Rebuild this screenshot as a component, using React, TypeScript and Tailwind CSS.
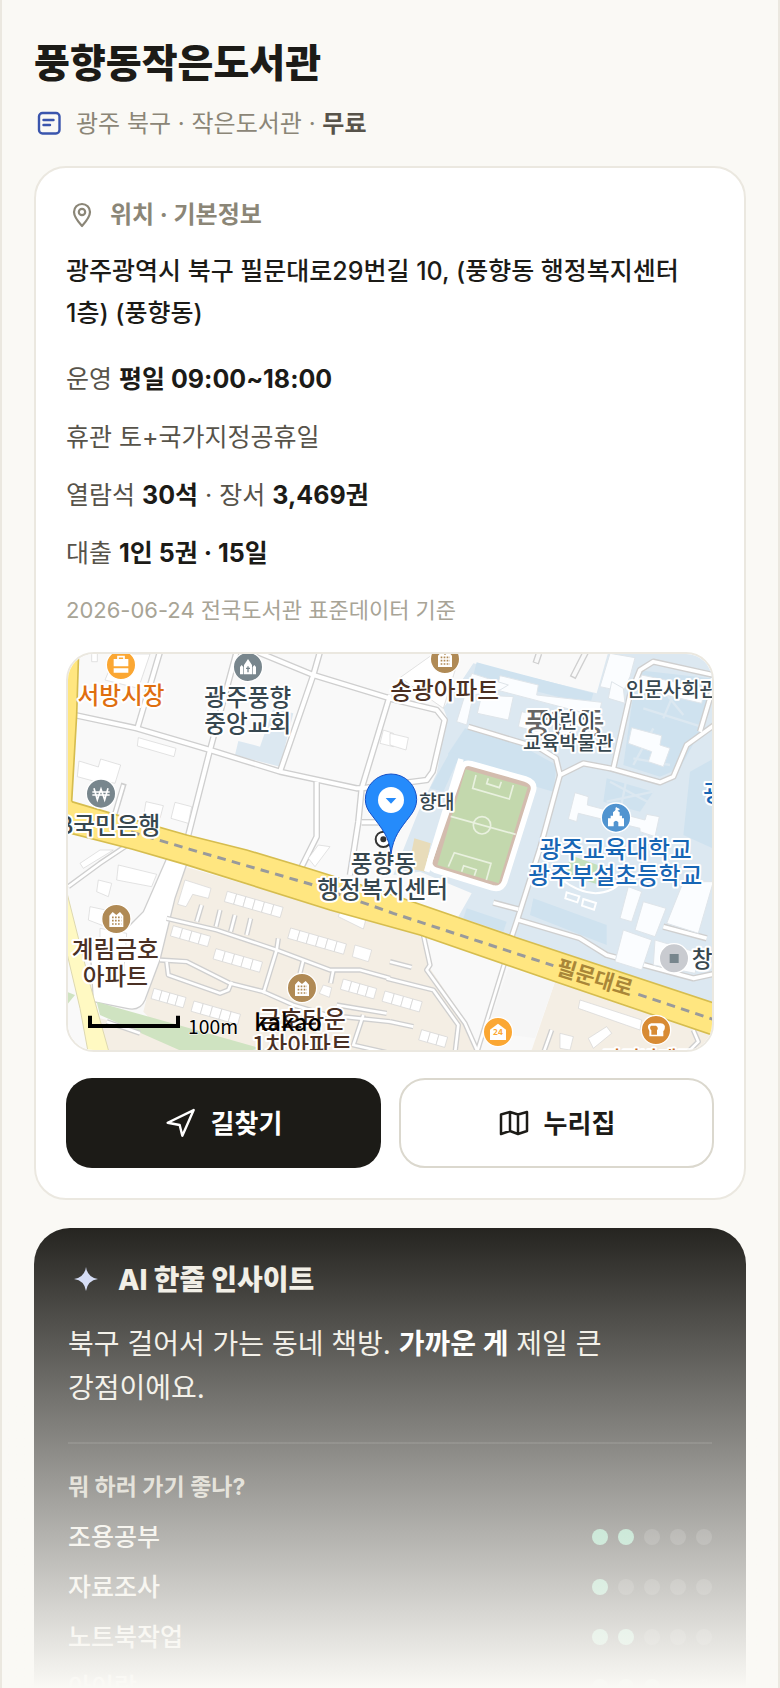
import React from "react";

/* ---------- map drawing ---------- */

type Pts = string;

const streets: Pts[] = [
  "20,205 230,250 450,315 660,380 890,430 905,430 1100,405 1118,380 1154,225 1130,195 985,160",
  "300,20 232,250",
  "530,20 450,315 385,570",
  "590,20 760,90 990,160",
  "780,20 760,90 660,380",
  "990,150 905,430 895,530 870,690",
  "770,410 770,575 725,665",
  "905,532 970,532",
];

const campusRoads: Pts[] = [
  "1225,245 1300,268 1440,310 1488,340 1500,390 1570,355 1650,370 1800,412 1840,395 1880,300 1970,235",
  "1500,390 1440,610 1370,830 1350,890",
  "1660,370 1710,150 1740,75 1780,50 1970,92 1920,260",
  "1375,825 1560,880 1640,930 1900,1000 1970,985",
  "1300,773 1375,793",
  "1810,845 1940,880",
];

const southRoads: Pts[] = [
  "1335,950 1250,1225",
  "1090,870 1110,960 1100,975 1215,1135 1255,1225",
  "980,1000 1120,1035 1195,1140 1185,1225",
  "320,820 470,855 650,915 810,975 900,975 990,1000",
  "300,945 380,950 510,1015 610,1040 700,1080 800,1110 990,1130",
  "320,950 325,990 480,1045 505,1035 515,1010",
  "655,880 650,915 610,1045",
  "425,780 410,830",
  "480,795 468,845",
  "525,810 512,860",
  "572,820 560,870",
  "730,945 720,985",
  "820,975 812,1015",
  "830,1080 980,1105",
  "910,1110 880,1200 990,1225",
  "990,950 1055,967",
  "990,1130 1060,1145",
  "1475,1155 1450,1225",
  "1900,1155 1915,1190 1880,1225",
  "25,725 120,655 210,595",
  "140,1130 240,1165",
];

const shapes: Pts[] = [
  "235,278 348,310 342,335 232,303",
  "57,348 115,366 122,342 182,360 165,415 120,405 115,412 52,395",
  "258,470 310,482 300,520 252,505",
  "345,472 395,485 385,535 333,520",
  "180,27 270,27 235,130 135,105 150,70 165,75",
  "95,22 112,22 112,50 95,50",
  "970,255 1000,265 1000,305 960,295",
  "990,265 1045,278 1038,315 990,300",
  "1020,98 1120,27 1180,27 1190,60 1150,190",
  "745,640 775,600 810,605 765,665",
  "375,705 453,730 445,760 398,748 378,785 353,778",
  "175,660 290,688 275,725 170,705",
  "115,705 155,715 145,755 110,740",
  "90,785 160,800 150,850 85,825",
  "885,900 935,915 925,950 877,935",
  "790,1020 815,1028 808,1057 778,1045",
  "840,800 917,825 910,852 835,815",
  "120,850 200,865 190,1000 120,1010",
  "60,655 120,615 160,615 70,670",
  "1560,1065 1745,1125 1740,1155 1555,1090",
  "1500,1165 1540,1175 1530,1215 1500,1210",
  "1585,1180 1640,1145 1655,1165 1600,1210",
];

const campusBuildings: Pts[] = [
  "1320,92 1435,120 1430,150 1625,172 1615,215 1310,135",
  "1190,230 1235,85 1345,120 1320,135 1240,150 1220,240",
  "1265,150 1360,155 1345,225 1252,205",
  "1385,200 1450,215 1445,265 1375,245",
  "1650,25 1725,38 1710,95 1690,140 1620,125",
  "1655,110 1690,130 1695,175 1645,160",
  "1745,90 1935,130 1925,175 1730,130",
  "1715,248 1805,272 1800,300 1830,310 1810,365 1765,350 1775,320 1705,295",
  "1545,443 1585,455 1582,480 1755,525 1760,508 1798,515 1785,575 1740,560 1740,550 1555,505 1550,530 1525,522",
  "1705,725 1745,740 1715,830 1680,820",
  "1750,770 1818,790 1785,875 1725,855",
  "1690,855 1775,885 1745,975 1665,950",
  "1785,885 1920,925 1905,985 1780,960",
  "1870,710 1960,710 1915,865 1820,835",
];

const roofs: { x: number; y: number; n: number; w?: number; h?: number }[] = [
  { x: 502, y: 739, n: 6 },
  { x: 692, y: 849, n: 6 },
  { x: 340, y: 842, n: 4 },
  { x: 468, y: 911, n: 5 },
  { x: 282, y: 1030, n: 4, w: 25 },
  { x: 402, y: 1068, n: 5 },
  { x: 850, y: 1002, n: 4, w: 26 },
  { x: 975, y: 1038, n: 4 },
  { x: 1085, y: 1154, n: 3, w: 27 },
];

function Roads({ list, w = 12 }: { list: Pts[]; w?: number }) {
  return (
    <g fill="none" strokeLinejoin="round">
      {list.map((p) => (
        <polyline key={"o" + p} points={p} stroke="#cfcfcf" strokeWidth={w + 8} />
      ))}
      {list.map((p) => (
        <polyline key={"i" + p} points={p} stroke="#ffffff" strokeWidth={w} />
      ))}
    </g>
  );
}

function Label({
  x,
  y,
  size = 71,
  fill = "#37474f",
  anchor = "middle",
  children,
}: {
  x: number;
  y: number;
  size?: number;
  fill?: string;
  anchor?: "start" | "middle" | "end";
  children: React.ReactNode;
}) {
  return (
    <text
      x={x}
      y={y}
      fontSize={size}
      fill={fill}
      textAnchor={anchor}
      fontWeight={500}
      stroke="#ffffff"
      strokeWidth={12}
      strokeLinejoin="round"
      paintOrder="stroke"
    >
      {children}
    </text>
  );
}

function Spot({ x, y, fill, children }: { x: number; y: number; fill: string; children?: React.ReactNode }) {
  return (
    <g transform={`translate(${x} ${y})`}>
      <circle r="44" fill={fill} stroke="#ffffff" strokeWidth="4" />
      {children}
    </g>
  );
}

function Apartment({ x, y }: { x: number; y: number }) {
  return (
    <Spot x={x} y={y} fill="#b08a55">
      <path d="M-21 24V-10l10-11 11 9 11-9 10 11v34z" fill="#fff" />
      <path d="M-13-5H15M-13 5H15M-13 15H15" stroke="#b08a55" strokeWidth="5" strokeDasharray="5 4" />
    </Spot>
  );
}

function MapDrawing() {
  return (
    <svg
      viewBox="24 27 1932 1188"
      preserveAspectRatio="xMidYMid slice"
      className="block h-full w-full font-['Noto_Sans_CJK_KR',sans-serif]"
      role="img"
      aria-label="풍향동 행정복지센터 주변 지도"
    >
      <rect x="0" y="0" width="2000" height="1260" fill="#f9f9f9" />

      <polygon points="535,288 600,305 640,190 700,205 660,365 525,330" fill="#dce8f1" />
      <polygon
        points="1240,55 1610,145 1645,20 1980,20 1980,1100 1195,815 1235,745 1080,680 1000,690 1075,500 1130,385 1160,215 1150,190"
        fill="#dce8f1"
      />
      <g fill="#cfe2ef">
        <polygon points="1250,52 1600,145 1590,180 1240,90" />
        <polygon points="1165,325 1215,250 1380,300 1490,360 1480,440 1170,350" />
        <polygon points="1730,75 1950,100 1920,260 1860,370 1800,395 1690,360" />
        <polygon points="1420,760 1640,840 1640,900 1410,810" />
        <polygon points="1220,790 1340,830 1330,860 1210,820" />
        <polygon points="1640,400 1780,440 1740,500 1630,470" />
        <polygon points="1890,380 1980,330 1980,620 1870,570" />
        <polygon points="1150,440 1200,330 1170,320 1110,430" />
      </g>
      <g stroke="#dce8f1" strokeWidth="7">
        <path d="M1650 410l130 70M1640 470l140-30M1700 400l-20 100M1780 250l-60 110M1720 340l110 20M1780 100l90 110M1860 100l-50 120M1750 190l190 60" />
      </g>

      <polygon points="375,665 1080,870 1110,970 1220,1130 1245,1225 370,1225 250,1100 325,800" fill="#f4eee4" />
      <polygon points="1485,1010 1980,1175 1980,1230 1410,1230" fill="#f4eee4" />
      <polygon points="120,1120 380,1190 480,1225 140,1225" fill="#f4eee4" />
      <polygon points="1090,880 1335,960 1255,1220 1220,1130 1110,970" fill="#f9f9f9" />
      <polygon points="1345,970 1485,1010 1425,1180 1280,1160" fill="#f6f6f6" />
      <path
        d="M320 640L380 658L345 760L300 945L255 1065Q240 1100 200 1090L100 1070L90 900L200 850L250 800Z"
        fill="#ffffff"
        stroke="#cfcfcf"
        strokeWidth="4"
      />
      <polygon points="110,1070 160,1085 620,1215 380,1225 120,1110" fill="#cfe3c1" />
      <polygon points="20,1040 45,1050 20,1080" fill="#cfe3c1" />

      <Roads list={streets} />
      <Roads list={campusRoads} w={11} />
      <Roads list={southRoads} w={8} />

      <g fill="none" strokeLinecap="butt">
        <path d="M1578 20L1538 98M1437 25l-10 30" stroke="#cfcfcf" strokeWidth="20" />
        <path d="M1578 20L1540 94M1437 25l-9 27" stroke="#f9f9f9" strokeWidth="12" />
        <path d="M192 415L165 505" stroke="#cfcfcf" strokeWidth="17" />
        <path d="M190 420L163 512" stroke="#ffffff" strokeWidth="9" />
      </g>

      <g fill="#ffffff" stroke="#d4d4d4" strokeWidth="2">
        {shapes.map((p) => (
          <polygon key={p} points={p} />
        ))}
        {roofs.map((r) => (
          <g key={r.x} transform={`translate(${r.x} ${r.y}) rotate(16)`}>
            {Array.from({ length: r.n }, (_, i) => (
              <rect key={i} x={i * (r.w ?? 29)} width={r.w ?? 29} height={r.h ?? 32} />
            ))}
          </g>
        ))}
      </g>
      <g fill="#fbfdff" stroke="#dfe5ea" strokeWidth="3">
        {campusBuildings.map((p) => (
          <polygon key={p} points={p} />
        ))}
      </g>
      <g fill="none" stroke="#ffffff" strokeWidth="6">
        <path d="M1520 742l38 12-6 18-36-12zM1570 762l38 12-6 20-36-12z" />
        <path d="M1500 700q70 55 130 42t50-60" />
      </g>
      <path d="M1530 630l110 40-20 50-100-30z" fill="#c3e0bd" />

      <polygon points="1063,580 1112,595 1095,680 1045,670" fill="#e8dcba" />
      <path
        d="M1205 372Q1210 350 1234 356L1396 402Q1426 412 1420 436L1334 710Q1324 736 1296 728L1125 675Q1104 665 1110 645Z"
        fill="#d3bcae"
        stroke="#ffffff"
        strokeWidth="17"
      />
      <path d="M1203 342L1100 680" stroke="#ffffff" strokeWidth="17" />
      <polygon points="1217,373 1403,427 1316,715 1132,660" fill="#c3d8ad" />
      <g fill="none" stroke="#e9f1df" strokeWidth="5">
        <circle cx="1266" cy="541" r="26" />
        <path d="M1172 514L1367 568M1248 390l-10 40 110 32 12-42M1285 400l-5 16 38 12 6-18M1165 665l18-42 110 32-14 50M1205 680l6-18 38 12-6 18" />
      </g>

      <g stroke="#d6bd4f" strokeWidth="5" strokeLinejoin="round">
        <path
          d="M20 468L35 470L205 520L380 570L560 615L750 672L990 747L1370 878L1980 1080V1178L1480 1008L1080 870L810 795L375 658L215 612L20 562Z"
          fill="#ffe680"
        />
      </g>
      <path d="M15 20H56L50 210L35 478L15 475Z" fill="#ffe680" />
      <path d="M56 20L50 210L35 470" fill="none" stroke="#d6bd4f" strokeWidth="5" />
      <path d="M15 720L92 1025L148 1225H85L60 1090L15 900Z" fill="#fff9c2" stroke="#ddd8b0" strokeWidth="3" />
      <path
        d="M170 548L390 613L750 717L1000 805L1480 962M1735 1048L1980 1130"
        fill="none"
        stroke="#999a9b"
        strokeWidth="9"
        strokeDasharray="26 19"
      />

      <text
        x="1485"
        y="986"
        fontSize="64"
        fontWeight="700"
        fill="#a98638"
        stroke="#ffe680"
        strokeWidth="8"
        paintOrder="stroke"
        transform="rotate(17 1485 986)"
      >
        필문대로
      </text>

      <Spot x={183} y={60} fill="#fba733">
        <path d="M-22-18H22V4H-22zM-22 10H22V23H-22z" fill="#fff" />
        <path d="M-9-16V-25H9V-16" fill="none" stroke="#fff" strokeWidth="5" />
      </Spot>
      <Label x={183} y={178} fill="#df6f10">서방시장</Label>

      <Spot x={564} y={66} fill="#78868d">
        <path d="M-12 22V-6L0-24 12-6V22zM-24 22V0l5-6 5 6v22zM14 22V0l5-6 5 6v22z" fill="#fff" />
        <path d="M0-2V16M-6 4H6" stroke="#78868d" strokeWidth="4" />
      </Spot>
      <Label x={563} y={182}>광주풍향</Label>
      <Label x={563} y={262}>중앙교회</Label>

      <Spot x={123} y={446} fill="#78868d">
        <path d="M-21-16l10 34L0-14 11 18 21-16M-26-5H26M-26 4H26" fill="none" stroke="#fff" strokeWidth="5" />
      </Spot>
      <Label x={301} y={566} anchor="end">KB국민은행</Label>

      <Apartment x={1155} y={42} />
      <Label x={1154} y={161} fill="#4a2f22">송광아파트</Label>

      <Label x={1513} y={267} size={87} fill="#666666">풍향동</Label>
      <Label x={1525} y={249} size={59}>어린이</Label>
      <Label x={1525} y={315} size={59}>교육박물관</Label>
      <Label x={1698} y={156} size={60} anchor="start">인문사회관</Label>
      <Label x={1077} y={492} size={58} anchor="start">향대</Label>
      <Label x={1930} y={471} anchor="start" fill="#1766b5">광주교대</Label>

      <Spot x={1668} y={518} fill="#5194d0">
        <path d="M-24 26V2h8v-8h7V-16L0-24 11-16v10h7v8h6V26H7V14q-7-9-14 0v12z" fill="#fff" />
        <path d="M0-20V-30l10 5-10 5" fill="#fff" stroke="#fff" strokeWidth="3" />
      </Spot>
      <Label x={1667} y={638} fill="#1766b5">광주교육대학교</Label>
      <Label x={1666} y={717} fill="#1766b5">광주부설초등학교</Label>

      <Apartment x={169} y={822} />
      <Label x={166} y={940} fill="#4a3024">계림금호</Label>
      <Label x={166} y={1019} fill="#4a3024">아파트</Label>

      <Apartment x={726} y={1029} />
      <Label x={727} y={1148} fill="#4a3024">금호타운</Label>
      <Label x={727} y={1227} fill="#4a3024">1차아파트</Label>

      <Spot x={1842} y={940} fill="#c9cbd0">
        <rect x="-13" y="-13" width="27" height="27" fill="#78868d" />
      </Spot>
      <Label x={1895} y={966} size={68} anchor="start">창의관</Label>

      <Spot x={1314} y={1161} fill="#fba733">
        <path d="M-24 24V-7L0-25 24-7V24z" fill="#fff" strokeLinejoin="round" />
        <text x="0" y="10" fontSize="25" fontWeight="700" fill="#fba733" textAnchor="middle">24</text>
      </Spot>
      <Spot x={1788} y={1155} fill="#d88b34">
        <path d="M-14-20H14q16 2 12 16-1 5-4 7V19H-20V3q-11-18 6-23z" fill="#fff" />
        <path d="M-15-13H0q9 6 3 14V14H-14V1q-7-8-1-14z" fill="#d88b34" />
      </Spot>
      <Label x={1767} y={1262} size={60} fill="#c96a1a">파리바게뜨</Label>

      <circle cx="970" cy="583" r="23" fill="#fff" stroke="#333333" strokeWidth="6" />
      <circle cx="970" cy="583" r="9" fill="#333333" />
      <Label x={970} y={680}>풍향동</Label>
      <Label x={968} y={759}>행정복지센터</Label>

      <path
        d="M993 627C988 575 965 550 935 510Q916 488 916 464A77 77 0 0 1 1070 464Q1070 488 1051 512C1020 552 1000 575 993 627Z"
        fill="#258bfb"
        stroke="#1550c8"
        strokeWidth="3"
      />
      <circle cx="993" cy="465" r="39" fill="#ffffff" />
      <path d="M977 459h32l-16 17z" fill="#258bfb" />

      <path d="M90 1112V1143H354V1112" fill="none" stroke="#000000" strokeWidth="12" />
      <text x="384" y="1166" fontSize="58" fill="#000000" stroke="#fff" strokeWidth="3" paintOrder="stroke">100m</text>
      <text x="583" y="1158" fontSize="70" fontWeight="500" fill="#000000">kakao</text>
    </svg>
  );
}

/* ---------- icons ---------- */

function NoteIcon() {
  return (
    <svg viewBox="0 0 30 30" className="size-[30px]" fill="none" stroke="#3a55ad" strokeWidth="2.4" strokeLinecap="round" aria-hidden="true">
      <rect x="5" y="4" width="20.500" height="20.500" rx="3.500" />
      <path d="M9.500 11H19.500M9.500 16H16" />
    </svg>
  );
}

function PlaceIcon() {
  return (
    <svg viewBox="0 0 32 32" className="size-8" fill="none" stroke="#8b8677" strokeWidth="2.2" strokeLinejoin="round" aria-hidden="true">
      <path d="M16 27C11 21.500 8 17.500 8 13a8 8 0 0 1 16 0c0 4.500-3 8.500-8 14Z" />
      <circle cx="16" cy="13" r="3.200" />
    </svg>
  );
}

function RouteIcon() {
  return (
    <svg viewBox="0 0 24 24" className="size-8" fill="none" stroke="currentColor" strokeWidth="1.8" strokeLinejoin="round" aria-hidden="true">
      <path d="M2 11.800 21.500 2.300 13 21.500 11 13.500Z" />
    </svg>
  );
}

function FoldedMapIcon() {
  return (
    <svg viewBox="0 0 32 32" className="size-8" fill="none" stroke="currentColor" strokeWidth="2.500" strokeLinejoin="round" aria-hidden="true">
      <path d="M3 7.500 12 5l8 2.500L29 5v19l-9 3-8-3-9 3Z M12 5v19M20 7.500V27" />
    </svg>
  );
}

function SparkIcon() {
  return (
    <svg viewBox="0 0 36 36" className="size-9" fill="#cfd8f5" aria-hidden="true">
      <path d="M18 5Q19.500 15.500 30 17 19.500 18.500 18 29 16.500 18.500 6 17 16.500 15.500 18 5Z" />
    </svg>
  );
}

/* ---------- content ---------- */

const ratings = [
  { name: "조용공부", score: 2 },
  { name: "자료조사", score: 1 },
  { name: "노트북작업", score: 2 },
  { name: "아이랑", score: 3 },
];

function Dots({ score }: { score: number }) {
  return (
    <span className="flex gap-2.5" role="img" aria-label={`5점 중 ${score}점`}>
      {[1, 2, 3, 4, 5].map((n) => (
        <span key={n} className={n <= score ? "size-4 rounded-full bg-[#6fc79f]" : "size-4 rounded-full bg-white/15"} />
      ))}
    </span>
  );
}

function Strong({ children }: { children: React.ReactNode }) {
  return <strong className="font-bold text-[#1c1b17]">{children}</strong>;
}

export default function App() {
  return (
    <main className="relative h-screen overflow-hidden border-x-2 border-[#ebe8e0] bg-[#faf9f5] px-8 pt-[38px] font-[Inter,'Noto_Sans_CJK_KR',sans-serif] text-[#1c1b17] break-keep">
      <h1 className="text-[39px] leading-[50px] font-black">풍향동작은도서관</h1>
      <p className="mt-5 flex items-center gap-3 text-[24px] leading-[32px] text-[#8b8677]">
        <NoteIcon />
        <span>
          광주 북구 · 작은도서관 · <strong className="font-semibold text-[#57534a]">무료</strong>
        </span>
      </p>

      <section className="mt-[26px] rounded-[32px] border-2 border-[#ebe8e0] bg-white p-[30px]">
        <h2 className="flex items-center gap-3 text-[24px] leading-[34px] font-bold text-[#8b8677]">
          <PlaceIcon />
          위치 · 기본정보
        </h2>
        <p className="mt-[18px] text-[25px] leading-[42px] font-medium">
          광주광역시 북구 필문대로29번길 10, (풍향동 행정복지센터 1층) (풍향동)
        </p>
        <div className="mt-7 flex flex-col gap-6 text-[25px] leading-[34px] text-[#57534a]">
          <p>운영 <Strong>평일 09:00~18:00</Strong></p>
          <p>휴관 토+국가지정공휴일</p>
          <p>열람석 <Strong>30석</Strong> · 장서 <Strong>3,469권</Strong></p>
          <p>대출 <Strong>1인 5권 · 15일</Strong></p>
        </div>
        <p className="mt-6 text-[22px] leading-8 text-[#a8a496]">2026-06-24 전국도서관 표준데이터 기준</p>
        <div className="mt-[26px] h-[400px] overflow-hidden rounded-[28px] border-2 border-[#ebe8e0]">
          <MapDrawing />
        </div>
        <div className="mt-[26px] grid grid-cols-2 gap-[18px] text-[26px] font-bold">
          <button type="button" className="flex h-[90px] items-center justify-center gap-3.5 rounded-[26px] bg-[#1c1b17] text-white">
            <RouteIcon />
            길찾기
          </button>
          <button type="button" className="flex h-[90px] items-center justify-center gap-3.5 rounded-[26px] border-2 border-[#dbd8ce] bg-white">
            <FoldedMapIcon />
            누리집
          </button>
        </div>
      </section>

      <section className="mt-7 rounded-[36px] bg-[#1c1b17] px-[34px] pt-8 pb-10 text-[#f0ede4]">
        <h2 className="flex items-center gap-3.5 text-[28px] leading-10 font-extrabold">
          <SparkIcon />
          AI 한줄 인사이트
        </h2>
        <p className="mt-[22px] mr-[60px] text-[28px] leading-[44px]">
          북구 걸어서 가는 동네 책방. <strong className="font-bold text-white">가까운 게</strong> 제일 큰 강점이에요.
        </p>
        <hr className="mt-8 border-t-2 border-white/10" />
        <h3 className="mt-[26px] text-[23px] leading-[34px] font-bold text-[#c9c5b8]">뭐 하러 가기 좋나?</h3>
        <ul className="mt-4 flex flex-col gap-4 text-[25px] leading-[34px] font-medium">
          {ratings.map((r) => (
            <li key={r.name} className="flex items-center justify-between">
              {r.name}
              <Dots score={r.score} />
            </li>
          ))}
        </ul>
      </section>

      <div className="pointer-events-none absolute -inset-x-0.5 bottom-0 h-[480px] bg-linear-to-b from-[#faf9f5]/0 to-[#faf9f5]" />
    </main>
  );
}
